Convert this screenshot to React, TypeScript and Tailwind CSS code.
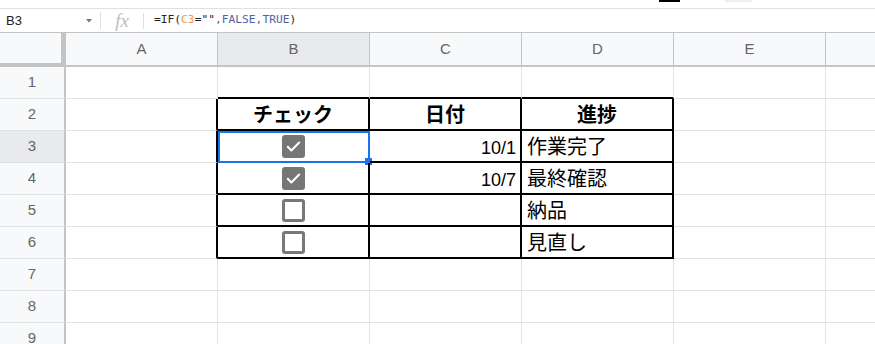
import React from 'react';

const COLS = ['A', 'B', 'C', 'D', 'E'];
const ROWS = [1, 2, 3, 4, 5, 6, 7, 8, 9];

const DATA: Record<number, { check?: boolean; date?: string; note?: string }> = {
  3: { check: true, date: '10/1', note: '作業完了' },
  4: { check: true, date: '10/7', note: '最終確認' },
  5: { check: false, note: '納品' },
  6: { check: false, note: '見直し' },
};

const sans = 'font-["Liberation_Sans","Noto_Sans_CJK_JP",sans-serif]';

const Checkbox = ({ checked }: { checked: boolean }) =>
  checked ? (
    <div className="w-[23px] h-[23px] rounded-[3px] bg-[#767676] flex items-center justify-center">
      <svg width="17" height="17" viewBox="0 0 24 24" fill="none">
        <path d="M4 12.5l5 5L20 6.5" stroke="white" strokeWidth="3" strokeLinecap="round" strokeLinejoin="round" />
      </svg>
    </div>
  ) : (
    <div className="w-[23px] h-[23px] rounded-[3px] border-[3px] border-[#787878] bg-white" />
  );

function borderFor(r: number, c: number) {
  const inTable = r >= 2 && r <= 6 && c >= 1 && c <= 3;
  if (inTable) return 'border-r-2 border-b-2 border-r-black border-b-black';
  if (r === 1 && c >= 1 && c <= 3) return 'border-r border-b-2 border-r-[#e2e2e2] border-b-black';
  if (c === 0 && r >= 2 && r <= 6) return 'border-r-2 border-b border-r-black border-b-[#e2e2e2]';
  return 'border-r border-b border-r-[#e2e2e2] border-b-[#e2e2e2]';
}

function CellContent({ r, c }: { r: number; c: number }) {
  if (r === 2 && c >= 1 && c <= 3) {
    const label = ['チェック', '日付', '進捗'][c - 1];
    return (
      <div className="h-full flex items-end justify-center pb-[3px]">
        <span className="text-[20px] leading-[22px] font-bold text-black">{label}</span>
      </div>
    );
  }
  const row = DATA[r];
  if (!row) return null;
  if (c === 1 && row.check !== undefined) {
    return (
      <div className="h-full flex items-center justify-center">
        <Checkbox checked={row.check} />
      </div>
    );
  }
  if (c === 2 && row.date) {
    return (
      <div className="h-full flex items-end justify-end pr-[4px] pb-[2px]">
        <span className="text-[18px] leading-[22px] text-black">{row.date}</span>
      </div>
    );
  }
  if (c === 3 && row.note) {
    return (
      <div className="h-full flex items-end justify-start pl-[5px] pb-[3px]">
        <span className="text-[20px] leading-[22px] text-black">{row.note}</span>
      </div>
    );
  }
  return null;
}

export default function App() {
  return (
    <div className={`w-[875px] h-[344px] overflow-hidden bg-white ${sans}`}>
      {/* toolbar remnants */}
      <div className="h-[8px] flex items-start">
        <div className="ml-[659px] w-[21px] h-[2px] bg-black" />
        <div className="ml-[45px] w-[27px] h-[2px] bg-[#eeeeee]" />
      </div>

      {/* formula bar */}
      <div className="h-[24px] border-t border-[#e0e0e0] flex items-center">
        <div className="w-[100px] flex items-center pl-[6px] pr-[8px]">
          <span className="text-[13px] text-[#222]">B3</span>
          <svg className="ml-auto" width="6" height="4" viewBox="0 0 6 4">
            <path d="M0 0h6L3 3.5z" fill="#777" />
          </svg>
        </div>
        <div className="w-px h-[17px] bg-[#e0e0e0]" />
        <div className="w-[42px] flex justify-center">
          <span className='font-["Liberation_Serif",serif] italic text-[19px] leading-none text-[#bdbdbd]'>fx</span>
        </div>
        <div className="w-px h-[16px] bg-[#e0e0e0]" />
        <div className='pl-[10px] font-["DejaVu_Sans_Mono",monospace] text-[11.25px] text-[#222]'>
          =IF(<span className="text-[#f0995a]">C3</span>=""<span className="text-[#4f62a0]">,FALSE,TRUE</span>)
        </div>
      </div>

      {/* grid */}
      <div className="grid grid-cols-[66px_repeat(5,152px)_1fr]">
        {/* header row */}
        <div className="h-[35px] bg-[#f8f9fa] border-t border-t-[#c4c4c4] border-r-[5px] border-b-[4px] border-r-[#c4c4c4] border-b-[#c4c4c4]" />
        {COLS.map((col) => (
          <div
            key={col}
            className={`h-[35px] border-t border-r border-b-2 border-[#c4c4c4] flex items-center justify-center text-[15px] text-[#666] ${
              col === 'B' ? 'bg-[#e8eaed]' : 'bg-[#f8f9fa]'
            }`}
          >
            {col}
          </div>
        ))}
        <div className="h-[35px] border-t border-b-2 border-[#c4c4c4] bg-[#f8f9fa]" />

        {ROWS.map((r) => (
          <React.Fragment key={r}>
            <div
              className={`h-[32px] border-r-2 border-b border-r-[#c4c4c4] border-b-[#e0e0e0] flex items-center justify-center text-[15px] text-[#666] ${
                r === 3 ? 'bg-[#e8eaed]' : 'bg-[#f8f9fa]'
              }`}
            >
              {r}
            </div>
            {[0, 1, 2, 3, 4].map((c) => (
              <div key={c} className={`relative h-[32px] ${borderFor(r, c)}`}>
                <CellContent r={r} c={c} />
                {r === 3 && c === 1 && (
                  <div className="absolute top-0 left-0 -right-[2px] -bottom-[2px] border-2 border-[#1a73e8] pointer-events-none">
                    <div className="absolute -right-[4px] -bottom-[4px] w-[7px] h-[7px] bg-[#1a73e8]" />
                  </div>
                )}
              </div>
            ))}
            <div className="h-[32px] border-b border-[#e2e2e2]" />
          </React.Fragment>
        ))}
      </div>
    </div>
  );
}
